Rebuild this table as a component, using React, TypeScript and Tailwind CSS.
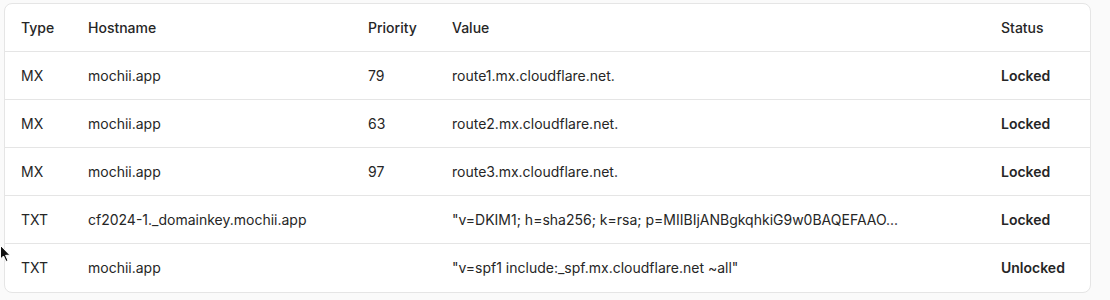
import React from "react";

const rows = [
  { type: "MX", host: "mochii.app", prio: "79", value: "route1.mx.cloudflare.net.", status: "Locked" },
  { type: "MX", host: "mochii.app", prio: "63", value: "route2.mx.cloudflare.net.", status: "Locked" },
  { type: "MX", host: "mochii.app", prio: "97", value: "route3.mx.cloudflare.net.", status: "Locked" },
  {
    type: "TXT",
    host: "cf2024-1._domainkey.mochii.app",
    prio: "",
    value: '"v=DKIM1; h=sha256; k=rsa; p=MIIBIjANBgkqhkiG9w0BAQEFAAO...',
    status: "Locked",
  },
  { type: "TXT", host: "mochii.app", prio: "", value: '"v=spf1 include:_spf.mx.cloudflare.net ~all"', status: "Unlocked" },
];

export default function App() {
  return (
    <div
      className="relative h-[300px] w-[1110px] bg-[#fafafa] pl-[4px] pt-[3px]"
      style={{ fontFamily: "Inter, 'Noto Sans', sans-serif" }}
    >
      <div className="w-[1087px] overflow-hidden rounded-lg border border-[#e5e5e5] bg-white">
        <table className="w-full table-fixed border-collapse text-[14px] text-[#262626]">
          <colgroup>
            <col className="w-[67px]" />
            <col className="w-[280px]" />
            <col className="w-[84px]" />
            <col className="w-[549px]" />
            <col />
          </colgroup>
          <thead>
            <tr className="h-[47px] border-b border-[#e5e5e5]">
              <th className="px-4 pt-px text-left font-medium">Type</th>
              <th className="px-4 pt-px text-left font-medium">Hostname</th>
              <th className="px-4 pt-px text-left font-medium">Priority</th>
              <th className="px-4 pt-px text-left font-medium">Value</th>
              <th className="px-4 pt-px text-left font-medium">Status</th>
            </tr>
          </thead>
          <tbody>
            {rows.map((r, i) => (
              <tr
                key={i}
                className={i < rows.length - 1 ? "h-[48px] border-b border-[#e5e5e5]" : "h-[49px]"}
              >
                <td className="px-4">{r.type}</td>
                <td className="px-4">{r.host}</td>
                <td className="px-4">{r.prio}</td>
                <td className="px-4 whitespace-nowrap">{r.value}</td>
                <td className="px-4 font-semibold">{r.status}</td>
              </tr>
            ))}
          </tbody>
        </table>
      </div>
      <svg className="absolute left-0 top-[245px]" width="12" height="18" viewBox="0 0 12 18">
        <path d="M0.5 0.5 L0.5 14 L3.5 11 L6 16.5 L8 15.6 L5.6 10.3 L10 10.3 Z" fill="#111" stroke="#fff" strokeWidth="1" />
      </svg>
    </div>
  );
}
